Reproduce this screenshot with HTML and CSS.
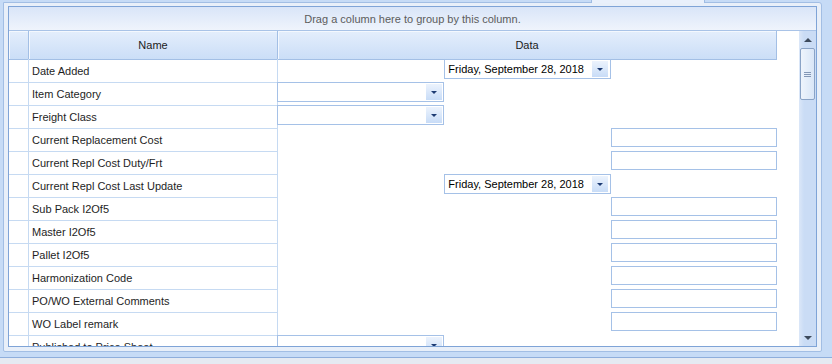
FILE: index.html
```html
<!DOCTYPE html>
<html lang="en">
<head>
    <meta charset="UTF-8">
    <meta name="viewport" content="width=device-width, initial-scale=1.0">
    <title>Item Properties</title>
    <link rel="stylesheet" href="styles.css">
</head>
<body>
    <div class="tabstrip"><span class="tab"></span></div>

    <div class="panel">
        <div class="grid">
            <div class="group-panel">Drag a column here to group by this column.</div>

            <div class="grid-main">
                <div class="grid-table">
                    <div class="row header-row">
                        <div class="hcell ind"></div>
                        <div class="hcell">Name</div>
                        <div class="hcell">Data</div>
                    </div>

                    <div class="grid-rows">
                        <div class="row">
                            <div class="cell ind"></div>
                            <div class="cell name">Date Added</div>
                            <div class="cell data"><div class="editor date">Friday, September 28, 2018<span class="drop"></span></div></div>
                        </div>
                        <div class="row">
                            <div class="cell ind"></div>
                            <div class="cell name">Item Category</div>
                            <div class="cell data"><div class="editor combo"><span class="drop"></span></div></div>
                        </div>
                        <div class="row">
                            <div class="cell ind"></div>
                            <div class="cell name">Freight Class</div>
                            <div class="cell data"><div class="editor combo"><span class="drop"></span></div></div>
                        </div>
                        <div class="row">
                            <div class="cell ind"></div>
                            <div class="cell name">Current Replacement Cost</div>
                            <div class="cell data"><div class="editor text"></div></div>
                        </div>
                        <div class="row">
                            <div class="cell ind"></div>
                            <div class="cell name">Current Repl Cost Duty/Frt</div>
                            <div class="cell data"><div class="editor text"></div></div>
                        </div>
                        <div class="row">
                            <div class="cell ind"></div>
                            <div class="cell name">Current Repl Cost Last Update</div>
                            <div class="cell data"><div class="editor date">Friday, September 28, 2018<span class="drop"></span></div></div>
                        </div>
                        <div class="row">
                            <div class="cell ind"></div>
                            <div class="cell name">Sub Pack I2Of5</div>
                            <div class="cell data"><div class="editor text"></div></div>
                        </div>
                        <div class="row">
                            <div class="cell ind"></div>
                            <div class="cell name">Master I2Of5</div>
                            <div class="cell data"><div class="editor text"></div></div>
                        </div>
                        <div class="row">
                            <div class="cell ind"></div>
                            <div class="cell name">Pallet I2Of5</div>
                            <div class="cell data"><div class="editor text"></div></div>
                        </div>
                        <div class="row">
                            <div class="cell ind"></div>
                            <div class="cell name">Harmonization Code</div>
                            <div class="cell data"><div class="editor text"></div></div>
                        </div>
                        <div class="row">
                            <div class="cell ind"></div>
                            <div class="cell name">PO/WO External Comments</div>
                            <div class="cell data"><div class="editor text"></div></div>
                        </div>
                        <div class="row">
                            <div class="cell ind"></div>
                            <div class="cell name">WO Label remark</div>
                            <div class="cell data"><div class="editor text"></div></div>
                        </div>
                        <div class="row">
                            <div class="cell ind"></div>
                            <div class="cell name">Published to Price Sheet</div>
                            <div class="cell data"><div class="editor combo"><span class="drop"></span></div></div>
                        </div>
                    </div>
                </div>

                <div class="vscroll">
                    <div class="sb-btn"><span class="arrow-up"></span></div>
                    <div class="sb-thumb"><span class="grip"></span></div>
                    <div class="sb-track"></div>
                    <div class="sb-btn"><span class="arrow-down"></span></div>
                </div>
            </div>
        </div>
    </div>

    <div class="footer"></div>
</body>
</html>
```

FILE: styles.css
```css
* {
    box-sizing: border-box;
}
html {
    background-color: #e5eaf2;
}
body {
    margin: 0;
    font-family: "Liberation Sans", Arial, sans-serif;
    font-size: 11px;
    color: #1e1e1e;
    background-color: #c6dbf6;
    overflow: hidden;
}
.tabstrip {
    height: 3px;
    margin-bottom: -1px;
}
.tab {
    display: block;
    position: relative;
    z-index: 1;
    margin-left: 591px;
    width: 114px;
    height: 3px;
    background-color: #e9f0fb;
    border-left: 1px solid #9fbce3;
    border-right: 1px solid #9fbce3;
}
.panel {
    margin: 0 10px 0 3px;
    height: 350px;
    padding: 3px 4px 4px 4px;
    background-color: #e8eff9;
    border: 1px solid #a2bee4;
    border-radius: 0 3px 2px 2px;
}
.grid {
    height: 341px;
    border: 1px solid #7fa4d7;
    background-color: #fff;
    display: flex;
    flex-direction: column;
}
.group-panel {
    height: 24px;
    line-height: 24px;
    text-align: center;
    color: #5c5c5c;
    background: linear-gradient(#d9e5f8, #eff4fc);
    border-bottom: 1px solid #a9c3e7;
}
.grid-main {
    flex: 1;
    display: flex;
    overflow: hidden;
}
.grid-table {
    width: 790px;
    overflow: hidden;
}
.row {
    display: grid;
    grid-template-columns: 20px 249px 499px;
    height: 23px;
}
.header-row {
    height: 28px;
}
.hcell {
    text-align: center;
    line-height: 28px;
    color: #1b1b1b;
    background: linear-gradient(#e4eefc, #cbdef7);
    border-right: 1px solid #a3bfe5;
    border-bottom: 1px solid #a3bfe5;
    box-shadow: inset 1px 1px 0 #f4f8fe;
}
.cell {
    border-bottom: 1px solid #c6daf2;
}
.cell.ind, .cell.name {
    border-right: 1px solid #c6daf2;
}
.cell.name {
    padding: 1px 0 0 3px;
    line-height: 22px;
    white-space: nowrap;
}
.cell.data {
    border-bottom: none;
    display: grid;
    grid-template-columns: repeat(3, 1fr);
    align-items: start;
}
.editor {
    border: 1px solid #a5c1e7;
    background-color: #fff;
    display: flex;
    align-items: center;
}
.editor.combo {
    grid-column: 1;
    height: 20px;
    margin-left: -1px;
    justify-content: flex-end;
    padding-right: 1px;
}
.editor.date {
    grid-column: 2;
    height: 20px;
    padding-left: 3px;
    padding-right: 2px;
    color: #000;
    justify-content: space-between;
}
.editor.text {
    grid-column: 3;
    height: 19px;
}
.drop {
    width: 16px;
    height: 16px;
    background: linear-gradient(#ecf3fd, #c8dcf7);
    display: flex;
    align-items: center;
    justify-content: center;
}
.drop::after {
    content: "";
    border-left: 3px solid transparent;
    border-right: 3px solid transparent;
    border-top: 3px solid #1d3b73;
}
.vscroll {
    width: 17px;
    display: flex;
    flex-direction: column;
    background: linear-gradient(90deg, #dbe7f8, #cadcf5 30%, #cadcf5);
}
.sb-btn {
    height: 17px;
    display: flex;
    align-items: center;
    justify-content: center;
}
.arrow-up {
    border-left: 4px solid transparent;
    border-right: 4px solid transparent;
    border-bottom: 4px solid #3d4a5c;
}
.arrow-down {
    border-left: 4px solid transparent;
    border-right: 4px solid transparent;
    border-top: 4px solid #3d4a5c;
}
.sb-thumb {
    height: 52px;
    margin: 0 1px;
    border: 1px solid #8aa3c6;
    border-radius: 2px;
    background: linear-gradient(90deg, #eef4fc, #d9e6f7);
    display: flex;
    align-items: center;
    justify-content: center;
}
.grip {
    width: 7px;
    height: 5px;
    border-top: 1px solid #8397b6;
    border-bottom: 1px solid #8397b6;
    background: linear-gradient(transparent 1px, #8397b6 1px, #8397b6 2px, transparent 2px);
}
.sb-track {
    flex: 1;
}
.footer {
    height: 6px;
    border-bottom: 1px solid #8eaedc;
}
```
